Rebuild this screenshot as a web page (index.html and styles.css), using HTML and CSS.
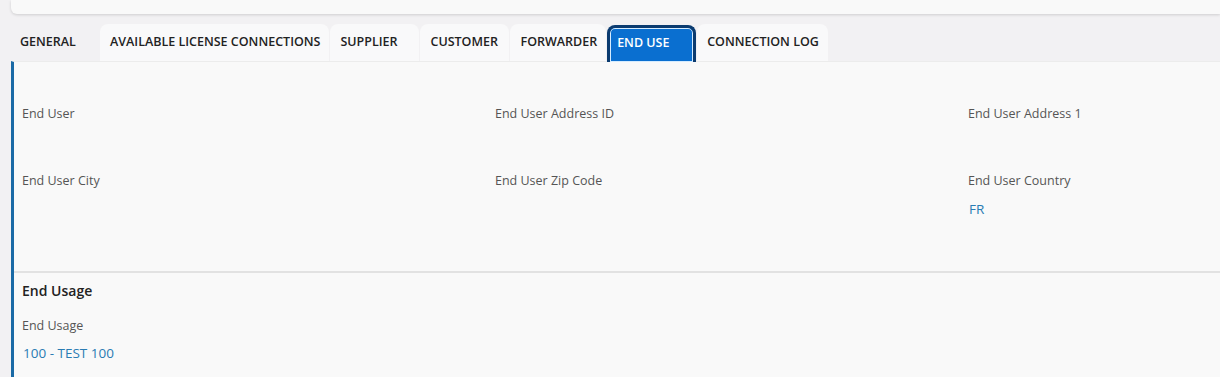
FILE: index.html
```
<!DOCTYPE html>
<html lang="en">
<head>
  <meta charset="UTF-8">
  <title>End Use</title>
  <link rel="stylesheet" href="styles.css">
</head>
<body>

  <div class="top-card"></div>

  <nav class="tabs">
    <div class="tab tab-plain">GENERAL</div>
    <div class="tab">AVAILABLE LICENSE CONNECTIONS</div>
    <div class="tab">SUPPLIER</div>
    <div class="tab">CUSTOMER</div>
    <div class="tab">FORWARDER</div>
    <div class="tab active">END USE</div>
    <div class="tab">CONNECTION LOG</div>
  </nav>

  <div class="panel">

    <div class="fields">
      <div class="field">
        <label>End User</label>
        <div class="value"></div>
      </div>
      <div class="field">
        <label>End User Address ID</label>
        <div class="value"></div>
      </div>
      <div class="field">
        <label>End User Address 1</label>
        <div class="value"></div>
      </div>
      <div class="field">
        <label>End User City</label>
        <div class="value"></div>
      </div>
      <div class="field">
        <label>End User Zip Code</label>
        <div class="value"></div>
      </div>
      <div class="field">
        <label>End User Country</label>
        <div class="value">FR</div>
      </div>
    </div>

    <div class="section">
      <h2>End Usage</h2>
      <div class="field">
        <label>End Usage</label>
        <div class="value">100 - TEST 100</div>
      </div>
    </div>

  </div>

</body>
</html>
```

FILE: styles.css
```
body {
  font-family: "Open Sans", sans-serif;
  background-color: #f2f1f3;
  margin: 0;
  color: #333;
  overflow: hidden;
}

.top-card {
  margin-left: 11px;
  height: 14px;
  background-color: #f9f9f9;
  border-radius: 0 0 0 6px;
  box-shadow: 0 1px 3px rgba(0,0,0,0.15);
}

.tabs {
  display: flex;
  align-items: flex-end;
  margin-top: 9px;
  padding-left: 10px;
  height: 38px;
}

.tab {
  box-sizing: border-box;
  min-width: 89px;
  height: 37px;
  padding: 0 9px 0 10px;
  margin-right: 1px;
  line-height: 35px;
  font-size: 12.5px;
  font-weight: 600;
  color: #222;
  background-color: #f9f9fa;
  border-radius: 8px 8px 0 0;
  white-space: nowrap;
}

.tab-plain {
  background-color: transparent;
}

.tab.active {
  height: 37px;
  line-height: 29px;
  color: #fff;
  background-color: #0a6fd0;
  border: 3px solid #0b3b70;
  border-bottom: none;
  box-shadow: inset 0 0 0 1px #d5ecff;
  padding: 0 7px;
  margin-bottom: -1px;
  position: relative;
}

.panel {
  margin-left: 11px;
  background-color: #f9f9f9;
  border-left: 3px solid #1a6aa6;
  border-top: 1px solid #ececec;
  height: 330px;
}

.fields {
  box-sizing: border-box;
  display: grid;
  grid-template-columns: repeat(3, 473px);
  align-content: start;
  padding: 43px 0 0 8px;
  height: 211px;
  border-bottom: 2px solid #e2e2e2;
}

.field {
  height: 67px;
}

label {
  display: block;
  font-size: 12.5px;
  color: #555;
  line-height: 18px;
}

.value {
  margin-top: 10px;
  font-size: 13.5px;
  line-height: 19px;
  color: #2a7cb3;
  padding-left: 1px;
}

.section {
  padding: 9px 0 0 8px;
}

h2 {
  margin: 0 0 17px;
  font-size: 14px;
  font-weight: 600;
  color: #222;
  line-height: 18px;
}

.section .value {
  margin-top: 9px;
}
```
